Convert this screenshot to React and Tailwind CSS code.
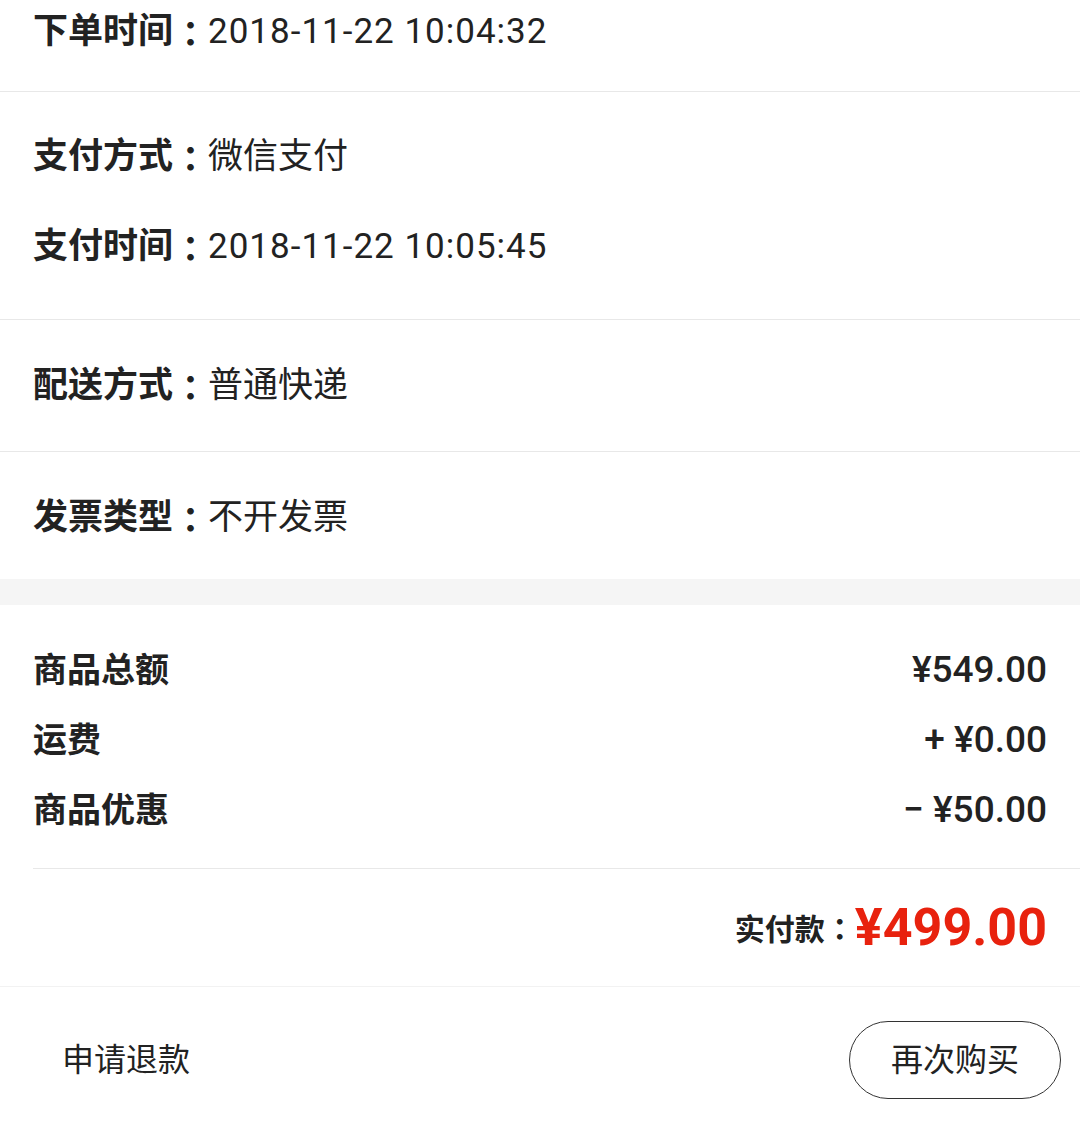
function Colon({ className = "" }) {
  return (
    <span className={className} style={{ fontFamily: '"Noto Sans CJK TC", sans-serif' }}>
      ：
    </span>
  );
}

function InfoRow({ label, value, wide }) {
  return (
    <div className="flex items-center h-[44px] text-[35px] leading-[44px] text-[#222]">
      <span className="font-bold">{label}</span>
      <Colon className="font-bold" />
      <span className={wide ? "tracking-[1px]" : ""}>{value}</span>
    </div>
  );
}

function PriceRow({ label, value }) {
  return (
    <div className="flex items-center justify-between h-[70px]">
      <span className="text-[34px] font-bold text-[#222]">{label}</span>
      <span className="text-[37px] font-medium text-[#222]">{value}</span>
    </div>
  );
}

export default function App() {
  return (
    <div
      className="w-[1080px] min-h-[1125px] bg-white"
      style={{ fontFamily: '"Roboto", "Noto Sans CJK SC", sans-serif' }}
    >
      {/* Order time */}
      <section className="pl-[33px] pt-[10px] h-[92px] border-b border-[#e8e8e8]">
        <InfoRow label="下单时间" value="2018-11-22 10:04:32" wide />
      </section>

      {/* Payment */}
      <section className="pl-[33px] pt-[43px] pb-[50px] border-b border-[#e8e8e8] flex flex-col gap-[46px]">
        <InfoRow label="支付方式" value="微信支付" />
        <InfoRow label="支付时间" value="2018-11-22 10:05:45" wide />
      </section>

      {/* Delivery */}
      <section className="pl-[33px] pt-[44px] pb-[43px] border-b border-[#e8e8e8]">
        <InfoRow label="配送方式" value="普通快递" />
      </section>

      {/* Invoice */}
      <section className="pl-[33px] pt-[44px] pb-[39px]">
        <InfoRow label="发票类型" value="不开发票" />
      </section>

      <div className="h-[26px] bg-[#f5f5f5]"></div>

      {/* Prices */}
      <section className="pl-[33px]">
        <div className="pr-[33px] pt-[30px] pb-[23px] border-b border-[#e8e8e8]">
          <PriceRow label="商品总额" value="¥549.00" />
          <PriceRow label="运费" value="+ ¥0.00" />
          <PriceRow label="商品优惠" value="− ¥50.00" />
        </div>
      </section>

      <section className="h-[118px] flex items-center justify-end pr-[33px] border-b border-[#f2f2f2]">
        <span className="text-[30px] font-bold text-[#222] mt-[2px]">
          实付款
          <Colon />
        </span>
        <span className="text-[52px] font-bold text-[#e8220e] leading-none">¥499.00</span>
      </section>

      {/* Actions */}
      <section className="h-[137px] pt-[8px] flex items-center justify-between pl-[62px] pr-[19px]">
        <span className="text-[32px] text-[#222]">申请退款</span>
        <button className="w-[212px] h-[78px] rounded-full border-[1.5px] border-[#333] text-[32px] text-[#222] bg-white">
          再次购买
        </button>
      </section>
    </div>
  );
}
